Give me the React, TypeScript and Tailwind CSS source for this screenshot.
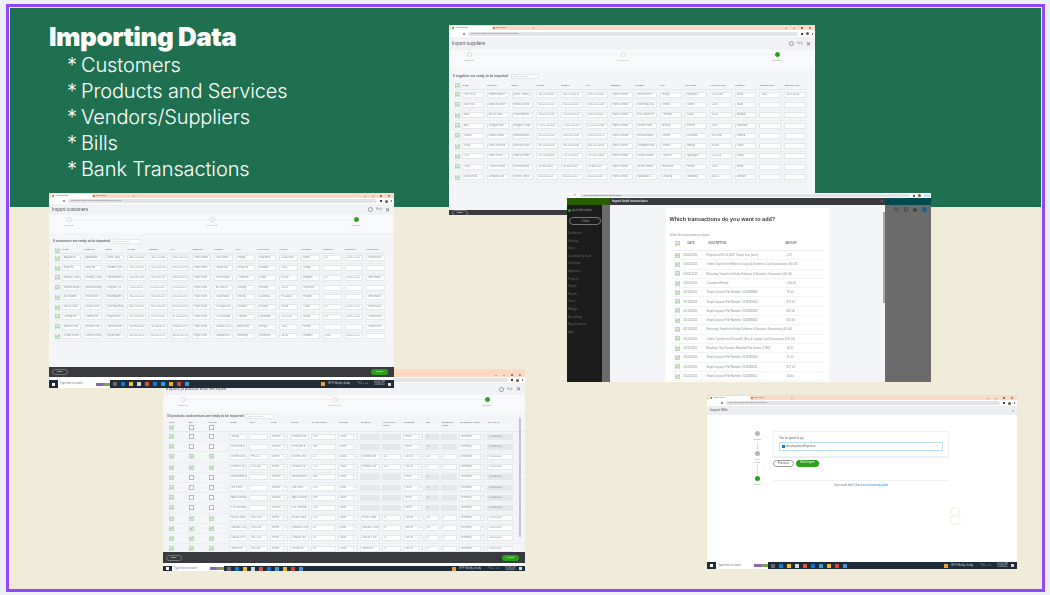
import type { ReactNode } from 'react';

const uiFont = "font-['Liberation_Sans',sans-serif]";

function Check({ on = true }: { on?: boolean }) {
  return (
    <span className={`flex h-[5px] w-[5px] shrink-0 items-center justify-center border-[0.5px] bg-white ${on ? 'border-[#bcd9b6]' : 'border-[#b5b7bb]'}`}>
      {on && (
        <svg viewBox="0 0 6 6" className="h-[4px] w-[4px] bg-[#dcefd8]">
          <path d="M1 3l1.4 1.5L5 1.4" fill="none" stroke="#2ca01c" strokeWidth="1" />
        </svg>
      )}
    </span>
  );
}

function Chrome({ tab, url, peach, bar }: { tab: string; url: string; peach: string; bar: string }) {
  return (
    <div className="shrink-0">
      <div className={`flex items-end bg-[#fdd9c3] pl-[2px] pr-[4px] ${peach}`}>
        <div className="flex h-[4px] w-[41px] items-center gap-[1px] rounded-t-[1px] bg-white pl-[1px] text-[2.5px] text-[#555]">
          <span className="h-[2px] w-[2px] rounded-full bg-[#2ca01c]" />
          {tab}
        </div>
        <div className="flex h-[4px] w-[41px] items-center gap-[1px] pl-[1px] text-[2.5px] text-[#555]">
          <span className="h-[2px] w-[2px] rounded-full bg-[#777]" />
          New Tab
        </div>
        <span className="text-[3px] leading-[4px] text-[#555]">+</span>
        <div className="ml-auto flex h-[4px] items-center gap-[6px]">
          <span className="h-[1px] w-[2px] bg-[#aaa]" />
          <span className="h-[1px] w-[2px] bg-[#aaa]" />
          <span className="h-[2px] w-[2px] bg-[#777]" />
          <span className="h-[2px] w-[2px] bg-[#999]" />
        </div>
      </div>
      <div className={`flex items-center gap-[3px] bg-white px-[2px] ${bar}`}>
        <span className="text-[3px] leading-none text-[#666]">←</span>
        <span className="text-[3px] leading-none text-[#aaa]">→</span>
        <span className="h-[2px] w-[2px] rounded-full bg-[#777]" />
        <div className="flex h-[4px] flex-1 items-center rounded-full bg-[#e1e3e6] px-[3px] text-[2.5px] text-[#777]">
          {url}
        </div>
        <span className="h-[2px] w-[2px] bg-[#444]" />
        <span className="h-[3px] w-[3px] rounded-full bg-[#6a5a55]" />
        <span className="h-[2px] w-[1px] bg-[#777]" />
      </div>
    </div>
  );
}

function Stepper({ h }: { h: string }) {
  return (
    <div className={`relative flex shrink-0 justify-between bg-[#f8f9fb] pl-[12px] pr-[30px] pt-[2px] ${h}`}>
      <div className="absolute left-[20px] right-[38px] top-[4px] h-[1px] bg-[#eceef1]" />
      {['UPLOAD', 'MAP DATA', 'IMPORT'].map((label, i) => (
        <div key={label} className="relative flex w-[16px] flex-col items-center gap-[2px]">
          <span
            className={`h-[5px] w-[5px] rounded-full border-[0.5px] ${
              i === 2 ? 'border-[#2ca01c] bg-[#2ca01c]' : 'border-[#d4d7dc] bg-white'
            }`}
          />
          <span className="whitespace-nowrap text-[2.5px] leading-[3px] text-[#8d9096]">{label}</span>
        </div>
      ))}
    </div>
  );
}

function Taskbar({ h }: { h: string }) {
  const colours = ['#667', '#0f7bd1', '#f2c037', '#cfd8dc', '#e0523f', '#1a6fd6', '#29a3e0', '#f0b429', '#d8453a', '#4a90d9'];
  return (
    <div className={`flex shrink-0 items-center bg-[#1f2c35] pr-[3px] text-[2.6px] text-[#ccd] ${h}`}>
      <span className="mx-[3px] h-[3px] w-[3px] bg-white" />
      <div className="flex h-full w-[38px] items-center bg-white px-[2px] text-[#777]">Type here to search</div>
      <div className="flex h-full w-[14px] flex-wrap content-center bg-white">
        <span className="h-[3px] w-[7px] bg-[#8a63b8]" />
        <span className="h-[3px] w-[7px] bg-[#7aa05a]" />
      </div>
      <div className="ml-[3px] flex items-center gap-[4px]">
        {colours.map((c, i) => (
          <svg key={i} viewBox="0 0 4 4" className="h-[4px] w-[4px]">
            <rect width="4" height="4" fill={c} />
          </svg>
        ))}
      </div>
      <div className="ml-auto flex items-center gap-[3px]">
        <span className="h-[4px] w-[4px] bg-[#e9a23b]" />
        <span>89°F Mostly cloudy</span>
        <span className="ml-[4px]">^ ☐ ◖ ☏</span>
        <span className="ml-[2px] text-center leading-[2.8px]">
          12:11 PM
          <br />
          5/5/2021
        </span>
        <span className="h-[3px] w-[3px] bg-[#ddd]" />
      </div>
    </div>
  );
}

function Footer({ h }: { h: string }) {
  return (
    <div className={`flex shrink-0 items-center justify-between bg-[#393a3d] px-[3px] ${h}`}>
      <span className="rounded-full border-[0.5px] border-[#777] px-[4px] text-[2.5px] leading-[4px] text-white">Back</span>
      <span className="mr-[3px] rounded-full bg-[#2ca01c] px-[5px] text-[2.5px] leading-[6px] text-white">Import</span>
    </div>
  );
}

function Field({ text, grey, max = 12 }: { text?: string; grey?: boolean; max?: number }) {
  return (
    <div
      className={`h-[6px] min-w-0 overflow-hidden whitespace-nowrap border-[0.5px] border-[#e6e7ea] px-[1px] text-[2.6px] leading-[4px] text-[#8d9096] ${
        grey ? 'bg-[#e6e7ea]' : 'bg-white'
      }`}
    >
      {text?.slice(0, max)}
    </div>
  );
}

function ImportShell(props: {
  title: string;
  url: string;
  className: string;
  peach: string;
  bar: string;
  head: string;
  step: string;
  foot: string;
  task?: string;
  gap?: string;
  children: ReactNode;
}) {
  return (
    <div className={`absolute flex flex-col overflow-hidden bg-[#f4f5f8] blur-[0.4px] ${uiFont} ${props.className}`}>
      <Chrome tab="QuickBooks" url={props.url} peach={props.peach} bar={props.bar} />
      <div className={`flex shrink-0 items-center justify-between bg-[#f1f2f5] pl-[3px] pr-[4px] ${props.head}`}>
        <span className="text-[4.7px] text-[#555]">{props.title}</span>
        <span className="flex items-center gap-[3px] text-[3px] text-[#999]">
          <span className="h-[5px] w-[5px] rounded-full border-[0.5px] border-[#999]" />
          Help
          <span className="text-[6px] leading-none text-[#666]">✕</span>
        </span>
      </div>
      <Stepper h={props.step} />
      <div className="min-h-0 flex-1 overflow-hidden">{props.children}</div>
      <Footer h={props.foot} />
      {props.task && <div className={`shrink-0 bg-white ${props.gap}`} />}
      {props.task && <Taskbar h={props.task} />}
    </div>
  );
}

function ReadyLabel({ text }: { text: string }) {
  return (
    <div className="flex items-center gap-[3px] text-[3.2px] font-bold text-[#666]">
      {text}
      <span className="h-[5px] w-[28px] border-[0.5px] border-[#e6e7ea] bg-white pl-[1px] text-[2.4px] font-normal leading-[4px] text-[#aaa]">
        Filter by name
      </span>
    </div>
  );
}

const supplierCols = ['NAME', 'COMPANY', 'EMAIL', 'PHONE', 'MOBILE', 'FAX', 'WEBSITE', 'STREET', 'CITY', 'PROVINCE', 'POSTAL CODE', 'COUNTRY', 'OPENING BAL', 'OPENING BAL'];
const supplierRows = [
  ['Tim Ficco', 'Hammerbros P', 'james_bond_p', '561-123-4414', '561-123-4411', '561-123-3100', 'https://somec', 'Sea Kitties HM', 'Heydy', 'Bay Area', '123-4546', 'Brazil', '1000', '2021-10-31'],
  ['Isla Ficco', 'Medical Green', 'medical_prod', '592-223-5100', '592-223-5101', '592-223-5100', 'https://somed', 'Nome Bay Sq', 'Seville', 'Seville', '1234', 'Spain', '', ''],
  ['Mark', 'Biscuit Valley', 'mindsexpress', '505-555-8119', '505-555-8110', '505-555-8111', 'https://somec', 'Rue Gabriel R', 'Thomity', 'Liege', '8100', 'Belgium', '', ''],
  ['Ana', 'Kolygian Mar', 'kolygian_enge', '1-111-225-414', '1-111-225-413', '1-111-222-044', 'https://somea', 'Grosen Hvar', 'Arrecig', 'Hrtvins', '1100', 'Gautman', '', ''],
  ['Toonio', 'Mattie Nordic', 'mattiesexpress', '355-552-1210', '355-552-1353', '355-553-3175', 'https://somed', 'Ehreisstraang', 'Vehlen', 'Uusimaa', 'FI-02048', 'Finland', '', ''],
  ['Vicky', 'Vans Grocerie', 'grocery@vans', '861-555-0310', '861-555-0350', '861-555-0130', 'https://somec', 'Zhongnan Roa', 'Wuhan', 'Beijing', '85006', 'China', '', ''],
  ['TJO', 'News Fruits T', 'tokyo@fruitbas', '371-555-4304', '371-55-0478', '371-555-4304', 'https://somek', 'Ochiai Nakaeri', 'Tjinrelle', 'Ngurageh', '25-3124', 'Jakrta', '', ''],
  ['Tisko', 'Tisokos Neom', 'tiskosepexnia', '30-695-4545', '30-695-4545', '30-695-1017', 'https://somez', 'Nelsex Meliste', 'Hosukleo', 'Hiraza', '1234', 'Hellos', '', ''],
  ['Lesley Ruiz', 'Lindqvist Marc', 'Isyeres_Impo', '46-555-0123', '46-555-1213', '46-555-0133', 'https://somej', 'Nydalavan 1', 'Leksang', 'Goteborg', '46131', 'Sweden', '', ''],
];
const customerCols = ['NAME', 'COMPANY', 'EMAIL', 'PHONE', 'MOBILE', 'FAX', 'WEBSITE', 'STREET', 'CITY', 'PROVINCE', 'POSTAL', 'COUNTRY', 'OPEN BAL', 'OPEN BAL', 'CUST TYPE'];
const customerRows = [
  ['Ajay Arora', 'Ajay Arora', 'arora_ajay_', '561-123-4641', '561-123-4642', '561-123-3110', 'https://www.ajo', 'Sea Kitties, P', 'Heydy', 'Bay Area', '1234-5409', 'Brazil', '15', '2021-12-31', 'Wholesale Tra'],
  ['Bing Ho', 'Bing Ho', 'shabber_pro', '592-223-5100', '592-223-5101', '592-223-5101', 'https://medi', 'Seijo Kato Gar', 'Shiya Ku', 'Bukdae', '1345', 'Seoby', '', '', ''],
  ['Mihaya Cramer', 'Mihaya Cramer', 'emindexpress', '505-555-7001', '505-555-7071', '505-555-8 8', 'https://some', 'Rue Gabriel, R', 'Thomlina', 'Liege', '81240', 'Belgium', '15', '2021-12-31', 'New Hand'],
  ['Renata Mager', 'Renata Mager', 'kolygian_eng', '1-111-222-444', '1-111-222-45', '1-111-222-24', 'https://some', 'Al Jarzi Street', 'Nihighy', 'Hrtindy', '11125', 'Tajhihoun', '', '', ''],
  ['Ed Newton', 'Ed Newton', 'mattiebygnes', '355-555-1210', '355-555-1353', '355-555-3175', 'https://some', 'Otavonkatu 6', 'Mikkey', 'Uusimaa', 'FI-02048', 'Finland', '', '', 'New Hand'],
  ['Nancy Jean', 'Nancy Jean', 'grocery@bean', '861-555-0310', '861-555-0350', '861-555-0130', 'https://some', 'N Lingod No', 'Shaltna', 'Beijing', '85006', 'China', '15', '2021-12-31', 'Wholesale Tra'],
  ['Tommy Ho', 'Tommy Ho', 'tokyo@fruitba', '371-555-4304', '371-555-4378', '371-555-4304', 'https://some', '25 Shukidake 8', 'Tijanma', 'Ngurageh', '252-2311', 'Jakrta', '15', '2021-12-31', 'Construction'],
  ['Mihalos Koko', 'Mihalos Koko', 'skinhealsom', '30-695-45645', '30-695-45-45', '30-695-10178', 'https://some', 'Zakova 12545', 'Ahyerlord', 'Hasyla', '1345', 'Hasha', '', '', 'Wholesale Tra'],
  ['Lenya Keene', 'Lenya Keene', 'leyroscayinpg', '46-555-0123', '46-555-1217', '46-555-0133', 'https://some', 'Nydalavan 4', 'Malmory', 'Goteborg', '46131', 'Sweden', '1000', '2021-12-31', ''],
];

const productCols = ['SELL', 'BUY', 'TRACK', 'NAME', 'SKU', 'TYPE', 'SALES', 'SALES PRICE', 'INCOME', 'PO DESC', 'PURCHASE COST', 'EXPENSE', 'QTY', 'REORDER POINT', 'INVENTORY ASSET', 'QTY AS OF'];
type Product = { name: string; sku?: string; sales: string; price: string; track?: boolean; buy?: string; cost?: string; qty: string; date: string };
const products: Product[] = [
  { name: 'Design', sales: 'Website Des', price: '700', qty: '0', date: '12/28/2021' },
  { name: 'Front end de', sales: 'Front-end de', price: '800', qty: '0', date: '12/28/2021' },
  { name: 'Wireless Ear', sku: 'PRO-17', sales: 'Wireless Ear', price: '15', track: true, buy: 'Wireless Head', cost: '10', qty: '20', date: '01/12/2021' },
  { name: 'Wireless Spe', sku: 'STD-001', sales: 'Wireless Spe', price: '275', track: true, buy: 'Wireless Spea', cost: '125', qty: '2', date: '01/12/2021' },
  { name: 'Backend dev', sales: 'Backend dev', price: '800', qty: '0', date: '12/28/2021' },
  { name: 'Job Posts', sales: 'Job Posts', price: '120', qty: '0', date: '12/28/2021' },
  { name: 'App Develop', sales: 'App Develop', price: '499', qty: '0', date: '12/28/2021' },
  { name: 'iOS Develop', sales: 'iOS Develop', price: '299', qty: '0', date: '12/28/2021' },
  { name: 'HDMI Cable', sku: 'SKU-190', sales: 'HDMI Cable', price: '120', track: true, buy: 'HDMI Cable', cost: '0', qty: '10', date: '01/12/2021' },
  { name: 'USB-A/C USB', sku: 'SKU-142', sales: 'USB-A/C USB', price: '20', track: true, buy: 'USB-A/C USB', cost: '0', qty: '10', date: '01/12/2021' },
  { name: 'USB-A 3 Po', sku: 'SKU-145', sales: 'USB-A 3 Po', price: '35', track: true, buy: 'USB-A 3 Port', cost: '0', qty: '3', date: '01/12/2021' },
  { name: 'Dental Kit', sku: 'SKU-09', sales: 'Dental Kit', price: '20', track: true, buy: 'Dental Kit', cost: '3', qty: '3', date: '01/12/2021' },
];
const productGrid = 'grid-cols-[18px_18px_19px_18px_19px_18px_19px_25px_20px_20px_19px_20px_14px_16px_26px_26px]';

function Select({ text }: { text: string }) {
  return (
    <div className="flex h-[6px] min-w-0 border-[0.5px] border-[#e6e7ea] bg-white text-[2.6px] leading-[4px] text-[#8d9096]">
      <span className="min-w-0 flex-1 overflow-hidden whitespace-nowrap pl-[1px]">{text}</span>
      <span className="w-[4px] border-l-[0.5px] border-[#e6e7ea] text-center text-[2.4px]">▾</span>
    </div>
  );
}

const bankRows = [
  ['05/01/2021', 'Payment of Rs 11,054* Chase Visa (xxxx)', '-175'],
  ['05/01/2021', 'Online Transfer for Website Layout & Business Card Xxxxxxxxxxx (90.19)', ''],
  ['05/01/2021', 'Recurring Transfer to Entity Software & Business Xxxxxxxxxx (45.00)', ''],
  ['05/05/2021', 'Customer Refund', '-250.00'],
  ['05/10/2021', 'Stripe Deposit: Ref Number: 1131888890', '76.10'],
  ['05/10/2021', 'Stripe Deposit: Ref Number: 1131889453', '873.61'],
  ['05/10/2021', 'Stripe Deposit: Ref Number: 1131888503', '567.00'],
  ['05/10/2021', 'Stripe Deposit: Ref Number: 1131888462', '613.00'],
  ['05/10/2021', 'Recurring Transfer to Entity Software & Business Xxxxxxxxxx (45.00)', ''],
  ['05/20/2021', 'Online Transfer for Microsoft Office & Laptop Card Xxxxxxxxxx (207.01)', ''],
  ['05/21/2021', 'Bluehost: Your Domain Renewal Fee Invoice 27861', '10.25'],
  ['05/24/2021', 'Stripe Deposit: Ref Number: 1132488054', '75.15'],
  ['05/24/2021', 'Stripe Deposit: Ref Number: 1132488251', '877.61'],
  ['05/24/2021', 'Stripe Deposit: Ref Number: 1132489152', '14.00'],
];
const bankNav = ['Dashboard', 'Banking', 'Sales', 'Customers & leads', 'Cash flow', 'Expenses', 'Projects', 'Payroll', 'Reports', 'Taxes', 'Mileage', 'Accounting', 'My accountant', 'Apps'];

export default function App() {
  return (
    <div className="relative h-[595px] w-[1050px] overflow-hidden bg-[#eeeef6] pl-[6px] pt-[4px]">
      <div className="flex h-[588px] w-[1039px] flex-col border-[3px] border-[#9146ff] bg-[#f1ebd9] pl-[1px] pt-[1px]">
        {/* Green title band */}
        <div className="mr-[1px] h-[199px] bg-[#1f7050] pl-[39px] pt-[14px] font-['Inter',sans-serif] text-white">
          <h1 className="text-[26px] font-black leading-[30px] tracking-[-0.5px]">Importing Data</h1>
          <ul className="text-[20px] font-light leading-[26px] tracking-[-0.12px]">
            {['Customers', 'Products and Services', 'Vendors/Suppliers', 'Bills', 'Bank Transactions'].map((item) => (
              <li key={item} className="flex pl-[18px]">
                <span className="w-[14px]">*</span>
                {item}
              </li>
            ))}
          </ul>
        </div>
      </div>

      {/* Suppliers screenshot */}
      <ImportShell
        title="Import suppliers"
        url="app.qbo.intuit.com/app/importdata/vendors"
        className="left-[449px] top-[25px] h-[190px] w-[366px]"
        peach="h-[5px]"
        bar="h-[7px]"
        head="h-[13px]"
        step="h-[18px]"
        foot="h-[5px]"
      >
        <div className="pl-[4px] pr-[9px] pt-[6px]">
          <ReadyLabel text="9 suppliers are ready to be imported" />
          <div className="ml-[2px] mt-[3px] flex h-[8px] items-center border-b-[0.5px] border-[#e6e7ea]">
            <Check />
            <div className="ml-[2px] grid flex-1 grid-cols-[repeat(14,minmax(0,1fr))] gap-[3px]">
              {supplierCols.map((c, i) => (
                <span key={i} className="whitespace-nowrap text-[2.2px] font-bold text-[#777]">{c}</span>
              ))}
            </div>
          </div>
          {supplierRows.map((row) => (
            <div key={row[0]} className="ml-[2px] flex h-[10.3px] items-center border-b-[0.5px] border-[#eceef1]">
              <Check />
              <div className="ml-[2px] grid flex-1 grid-cols-[repeat(14,minmax(0,1fr))] gap-[3px]">
                {row.map((v, i) => (
                  <Field key={i} text={v} max={13} />
                ))}
              </div>
            </div>
          ))}
        </div>
      </ImportShell>

      {/* Bank transactions screenshot */}
      <div className={`absolute left-[567px] top-[193px] flex h-[189px] w-[364px] flex-col overflow-hidden blur-[0.4px] ${uiFont}`}>
        <div className="flex h-[5px] shrink-0 items-center gap-[3px] bg-white px-[1px] text-[2.5px] text-[#666]">
          <span>← → ⟳</span>
          <div className="flex h-[3px] flex-1 items-center rounded-full bg-[#e1e3e6] px-[3px]">app.qbo.intuit.com/app/homepage</div>
          <span className="h-[2px] w-[2px] bg-[#555]" />
          <span className="h-[3px] w-[3px] rounded-full bg-[#6a5a55]" />
          <span className="h-[3px] w-[6px] bg-[#cfe3f5]" />
        </div>
        <div className="flex min-h-0 flex-1">
          <div className="flex w-[43px] shrink-0 flex-col bg-[#6b6b6b]">
            <div className="h-[7px] bg-[#2a5c00]" />
            <div className="mr-[8px] flex-1 overflow-hidden bg-[#1c1c1c] pl-[1px] text-[#666]">
              <div className="flex items-center gap-[1px] pt-[2px] text-[4px] text-[#888]">
                <span className="h-[3px] w-[3px] shrink-0 rounded-full bg-[#2ca01c]" />
                quickbooks
              </div>
              <div className="mx-[1px] mt-[4px] rounded-full border-[0.5px] border-[#777] text-center text-[3px] leading-[6px] text-[#999]">+ New</div>
              <div className="pt-[5px]">
                {bankNav.map((n) => (
                  <div key={n} className="h-[7.6px] whitespace-nowrap text-[2.8px] leading-[7.6px]">{n}</div>
                ))}
              </div>
            </div>
          </div>
          <div className="flex w-[275px] shrink-0 flex-col">
            <div className="flex h-[7px] items-center justify-between bg-[#393a3d] px-[2px] text-[3px] font-bold text-[#ddd]">
              Import bank transactions
              <span className="font-normal text-[#aaa]">×</span>
            </div>
            <div className="relative flex min-h-0 flex-1 justify-center bg-[#f4f5f8] pr-[1px] pt-[3px]">
              <div className="h-full w-[163px] overflow-hidden bg-white px-[4px] pt-[7px]">
                <h2 className="whitespace-nowrap text-[5.5px] font-bold leading-[8px] text-[#393a3d]">Which transactions do you want to add?</h2>
                <p className="pt-[10px] text-[2.8px] leading-[4px] text-[#8d9096]">Select the transactions to import</p>
                <div className="flex h-[14px] items-center gap-[6px] border-b-[0.5px] border-[#eceef1] pl-[5px] text-[2.6px] font-bold text-[#777]">
                  <Check />
                  <span className="w-[17px] pl-[2px]">DATE</span>
                  <span className="w-[71px]">DESCRIPTION</span>
                  <span>AMOUNT</span>
                </div>
                {bankRows.map((r, i) => (
                  <div key={i} className="flex h-[9.3px] items-center gap-[4px] border-b-[0.5px] border-[#f3f4f5] pl-[5px] text-[2.8px] text-[#8d9096]">
                    <Check />
                    <span className="w-[19px] shrink-0">{r[0]}</span>
                    <span className="w-[76px] shrink-0 whitespace-nowrap">{r[1]}</span>
                    <span>{r[2]}</span>
                  </div>
                ))}
              </div>
              <div className="absolute right-0 top-[7px] h-[91px] w-[2px] bg-[#a8a8a8]" />
            </div>
          </div>
          <div className="flex flex-1 flex-col bg-[#6b6b6b]">
            <div className="h-[7px] bg-[#00494f]" />
            <div className="flex items-center justify-end gap-[5px] pr-[4px] pt-[2px]">
              <svg viewBox="0 0 6 6" className="h-[5px] w-[5px]">
                <circle cx="2.5" cy="2.5" r="1.8" fill="none" stroke="#444" />
                <path d="M4 4l2 2" stroke="#444" />
              </svg>
              <span className="h-[5px] w-[4px] rounded-full border border-[#444]" />
              <span className="h-[4px] w-[4px] rounded-full bg-[#444]" />
              <span className="h-[5px] w-[5px] rounded-full bg-[#1a5f92]" />
            </div>
          </div>
        </div>
      </div>

      {/* Products screenshot */}
      <ImportShell
        title="Import products and services"
        url="app.qbo.intuit.com/app/importdata/products"
        className="left-[163px] top-[369px] h-[202px] w-[362px]"
        peach="h-[8px]"
        bar="h-[6px]"
        head="h-[12px]"
        step="h-[17px]"
        foot="h-[11px]"
        gap="h-[3px]"
        task="h-[5px]"
      >
        <div className="relative pl-[4px] pt-[2px]">
          <ReadyLabel text="10 products and services are ready to be imported" />
          <div className={`ml-[1px] grid h-[13px] gap-x-[2px] border-b-[0.5px] border-[#e6e7ea] pt-[2px] ${productGrid}`}>
            {productCols.map((c, i) => (
              <span key={i} className="flex flex-col gap-[1px] pl-[1px] text-[2.2px] font-bold leading-[2.6px] text-[#777]">
                {c}
                {i < 3 && <Check on={i === 0} />}
              </span>
            ))}
          </div>
          {products.map((p) => (
            <div key={p.name} className={`ml-[1px] grid h-[10.2px] items-center gap-x-[2px] border-b-[0.5px] border-[#eceef1] ${productGrid}`}>
              <span className="pl-[1px]"><Check /></span>
              <span className="pl-[1px]"><Check on={!!p.track} /></span>
              <span className="pl-[1px]"><Check on={!!p.track} /></span>
              <Field text={p.name} max={11} />
              <Field text={p.sku} max={11} />
              <Select text={p.track ? 'Invent' : 'Service'} />
              <Field text={p.sales} max={11} />
              <Field text={p.price} />
              <Select text="Sales" />
              <Field text={p.buy} grey={!p.track} max={11} />
              <Field text={p.cost} grey={!p.track} />
              <Select text={p.track ? 'Cost of' : 'Purch'} />
              <Field text={p.qty} grey={!p.track} />
              <Field text={p.track ? '1' : ''} grey={!p.track} />
              <Select text="Inventory" />
              <Field text={p.date} grey={!p.track} />
            </div>
          ))}
          <div className="absolute right-[4px] top-[6px] h-[119px] w-[2px] bg-[#c4c5c8]" />
        </div>
      </ImportShell>

      {/* Customers screenshot */}
      <ImportShell
        title="Import customers"
        url="app.qbo.intuit.com/app/importdata/customers"
        className="left-[49px] top-[193px] h-[195px] w-[345px]"
        peach="h-[5px]"
        bar="h-[6px]"
        head="h-[11px]"
        step="h-[18px]"
        foot="h-[10px]"
        gap="h-[3px]"
        task="h-[8px]"
      >
        <div className="pl-[4px] pr-[9px] pt-[6px]">
          <ReadyLabel text="9 customers are ready to be imported" />
          <div className="ml-[2px] mt-[3px] flex h-[7px] items-center border-b-[0.5px] border-[#e6e7ea]">
            <Check />
            <div className="ml-[2px] grid flex-1 grid-cols-[repeat(15,minmax(0,1fr))] gap-[3px]">
              {customerCols.map((c, i) => (
                <span key={i} className="whitespace-nowrap text-[2.2px] font-bold text-[#777]">{c}</span>
              ))}
            </div>
          </div>
          {customerRows.map((row) => (
            <div key={row[0]} className="ml-[2px] flex h-[9.75px] items-center border-b-[0.5px] border-[#eceef1]">
              <Check />
              <div className="ml-[2px] grid flex-1 grid-cols-[repeat(15,minmax(0,1fr))] gap-[3px]">
                {row.map((v, i) => (
                  <Field key={i} text={v} max={11} />
                ))}
              </div>
            </div>
          ))}
        </div>
      </ImportShell>

      {/* Bills screenshot */}
      <div className={`absolute left-[707px] top-[395px] flex h-[174px] w-[310px] flex-col overflow-hidden bg-white ${uiFont}`}>
        <Chrome tab="Import bills" url="app.qbo.intuit.com/app/bills/import" peach="h-[5px]" bar="h-[6px]" />
        <div className="flex h-[9px] shrink-0 items-center justify-between bg-[#eceef1] px-[3px] text-[3.6px] text-[#555] blur-[0.3px]">
          Import Bills
          <span className="text-[4px] text-[#777]">×</span>
        </div>
        <div className="relative flex min-h-0 flex-1 pl-[42px] pt-[16px]">
          <div className="flex w-[16px] flex-col items-center text-[2.5px] leading-[3px] text-[#8d9096] blur-[0.3px]">
            <span className="h-[5px] w-[5px] rounded-full bg-[#b5b7bb]" />
            <span className="pt-[2px]">Upload</span>
            <span className="my-[1px] h-[8px] w-[1px] bg-[#dcdde0]" />
            <span className="h-[5px] w-[5px] rounded-full bg-[#b5b7bb]" />
            <span className="pt-[2px] text-center">
              Map
              <br />
              Fields
            </span>
            <span className="my-[1px] h-[10px] w-[1px] bg-[#dcdde0]" />
            <span className="h-[5px] w-[5px] rounded-full bg-[#2ca01c]" />
            <span className="pt-[2px]">Import</span>
          </div>
          <div className="ml-[8px] w-[176px] blur-[0.3px]">
            <div className="border-[0.5px] border-[#f0f1f3] px-[5px] pb-[5px] pt-[3px] shadow-[0_1px_1px_#eeeeee]">
              <p className="text-[3.2px] leading-[6px] text-[#666]">You're good to go</p>
              <div className="mt-[1px] flex h-[9px] items-center gap-[1px] border-[0.5px] border-[#bcdcf3] bg-white px-[2px] text-[2.8px] text-[#666]">
                <span className="h-[2.5px] w-[2.5px] bg-[#0f7bd1]" />
                Uncategorized Expense
                <span className="ml-auto pr-[2px] text-[#999]">×</span>
              </div>
            </div>
            <div className="mt-[3px] flex gap-[2px] text-[2.8px] leading-[5px]">
              <span className="rounded-full border-[0.5px] border-[#999] px-[4px] text-[#555]">Previous</span>
              <span className="rounded-full bg-[#2ca01c] px-[4px] text-white">Start Import</span>
            </div>
            <div className="mt-[13px] border-t-[0.5px] border-[#f0f1f3] pt-[3px] text-center text-[2.6px] text-[#777]">
              If you need help? <span className="text-[#2a8fd0]">Check out our learning guide</span>
            </div>
          </div>
          <span className="absolute left-[241px] top-[90px] font-['Inter',sans-serif] text-[24px] font-extralight leading-none text-[#f5efe0]">8</span>
        </div>
        <div className="blur-[0.3px]">
          <Taskbar h="h-[7px]" />
        </div>
      </div>
    </div>
  );
}
